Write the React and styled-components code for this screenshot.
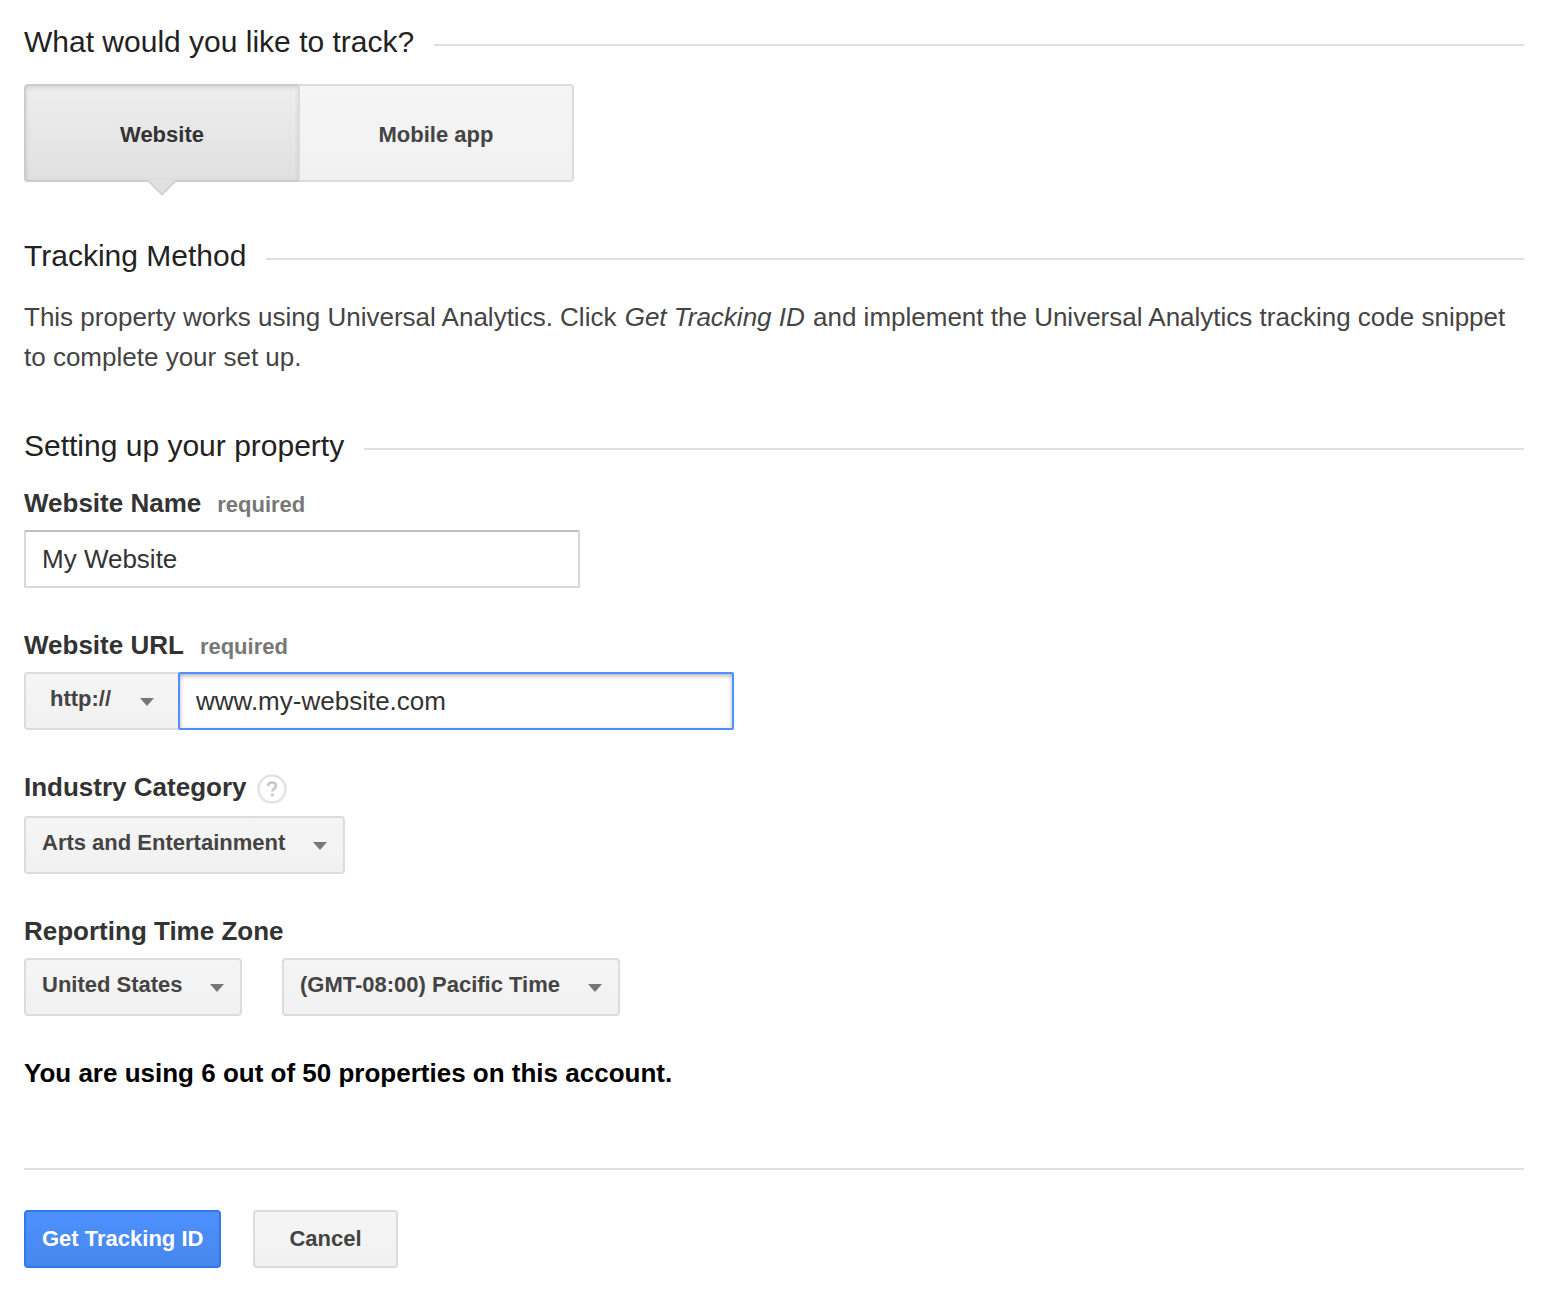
import React, { useState } from "react";
import styled, { createGlobalStyle, css } from "styled-components";

const GlobalStyle = createGlobalStyle`
  *, *::before, *::after { box-sizing: border-box; }
  body {
    margin: 0;
    background: #fff;
    color: #333;
    font-family: "Liberation Sans", Arial, Helvetica, sans-serif;
    font-size: 26px;
    line-height: 40px;
  }
  button, input, select { font-family: inherit; margin: 0; }
`;

const Form = styled.form`
  padding: 22px 36px 30px 24px;
`;

const SectionTitle = styled.h2`
  display: flex;
  align-items: center;
  gap: 20px;
  margin: 0;
  color: #222;
  font-size: 30px;
  font-weight: normal;
  line-height: 40px;

  &::after {
    content: "";
    flex: 1;
    height: 2px;
    margin-top: 6px;
    background: #e0e0e0;
  }
`;

const Section = styled.section`
  margin-bottom: ${(p) => p.$gap}px;
`;

const Tabs = styled.div`
  display: flex;
  max-width: 550px;
  margin-top: 22px;
`;

const Tab = styled.button`
  position: relative;
  flex: 1;
  height: 98px;
  padding: 4px 16px 0;
  border: 2px solid #dcdcdc;
  border-radius: 0 4px 4px 0;
  border-left-width: 0;
  background: linear-gradient(#f5f5f5, #f1f1f1);
  color: #444;
  font-size: 22px;
  font-weight: bold;
  cursor: pointer;

  &:first-child {
    border-left-width: 2px;
    border-radius: 4px 0 0 4px;
  }

  ${(p) =>
    p.$active &&
    css`
      border-color: #ccc #dcdcdc #ccc #ccc;
      background: linear-gradient(#eee, #e0e0e0);
      box-shadow: inset 0 2px 4px rgba(0, 0, 0, 0.1);
      color: #333;
    `}
`;

const Pointer = styled.svg`
  position: absolute;
  top: 100%;
  left: 50%;
  width: 28px;
  height: 16px;
  margin-left: -14px;
`;

const Copy = styled.p`
  margin: 21px 0 0;
  color: #444;

  em { margin: 0 1px; }
`;

const Fields = styled.div`
  margin-top: 22px;
`;

const Field = styled.div`
  display: flex;
  flex-direction: column;
  align-items: flex-start;
  gap: 12px;
  margin-bottom: 42px;
`;

const LabelRow = styled.div`
  display: flex;
  align-items: flex-start;
  gap: 10px;
  line-height: 30px;
`;

const Label = styled.label`
  color: #333;
  font-weight: bold;
`;

const Required = styled.span`
  margin-left: 16px;
  color: #777;
  font-size: 22px;
  line-height: 1;
`;

const Controls = styled.div`
  display: flex;
  gap: ${(p) => p.$gap || 0}px;
  max-width: 100%;
`;

const TextInput = styled.input`
  width: 556px;
  max-width: 100%;
  height: 58px;
  padding: 0 16px;
  border: 2px solid #d9d9d9;
  border-top-color: #c0c0c0;
  border-radius: 2px;
  background: #fff;
  color: #333;
  font-size: 26px;
  outline: none;

  ${(p) =>
    p.$focused &&
    css`
      border-color: #4d90fe;
      box-shadow: inset 0 2px 4px rgba(0, 0, 0, 0.3);
    `}
`;

const SelectBox = styled.div`
  display: grid;
  align-items: center;

  & > * { grid-area: 1 / 1; }
`;

const Select = styled.select`
  appearance: none;
  height: 58px;
  padding: 0 57px 6px 16px;
  border: 2px solid #dcdcdc;
  border-radius: 4px;
  background: linear-gradient(#f5f5f5, #f1f1f1);
  color: #444;
  font-size: 22px;
  font-weight: bold;
  outline: none;
  cursor: pointer;

  ${(p) =>
    p.$attached &&
    css`
      padding-right: 66px;
      padding-left: 24px;
      border-right-width: 0;
      border-radius: 4px 0 0 4px;
    `}
`;

const Caret = styled.svg`
  justify-self: end;
  width: 14px;
  height: 8px;
  margin-top: 2px;
  margin-right: ${(p) => (p.$attached ? 24 : 18)}px;
  pointer-events: none;
`;

const HelpButton = styled.button`
  display: flex;
  width: 30px;
  height: 30px;
  margin-top: 2px;
  padding: 0;
  border: 0;
  background: none;
  cursor: pointer;
`;

const Quota = styled.p`
  margin: 0;
  color: #000;
  font-weight: bold;
  line-height: 30px;
`;

const Actions = styled.div`
  display: flex;
  gap: 32px;
  margin-top: 80px;
  padding-top: 40px;
  border-top: 2px solid #e0e0e0;
`;

const Action = styled.button`
  height: 58px;
  padding: 0 ${(p) => (p.$primary ? 16 : 34)}px;
  border: 2px solid ${(p) => (p.$primary ? "#3079ed" : "#dcdcdc")};
  border-radius: 4px;
  background: ${(p) =>
    p.$primary
      ? "linear-gradient(#4d90fe, #4787ed)"
      : "linear-gradient(#f5f5f5, #f1f1f1)"};
  color: ${(p) => (p.$primary ? "#fff" : "#444")};
  font-size: 22px;
  font-weight: bold;
  cursor: pointer;
`;

function Dropdown({ options, attached, ...rest }) {
  return (
    <SelectBox>
      <Select $attached={attached} {...rest}>
        {options.map((option) => (
          <option key={option}>{option}</option>
        ))}
      </Select>
      <Caret $attached={attached} viewBox="0 0 14 8" aria-hidden="true">
        <path d="M0 0h14L7 8z" fill="#777" />
      </Caret>
    </SelectBox>
  );
}

const targets = ["Website", "Mobile app"];

export default function App() {
  const [target, setTarget] = useState("Website");

  return (
    <>
      <GlobalStyle />
      <Form onSubmit={(e) => e.preventDefault()}>
        <Section $gap={54}>
          <SectionTitle>What would you like to track?</SectionTitle>
          <Tabs>
            {targets.map((name) => (
              <Tab
                key={name}
                type="button"
                $active={name === target}
                aria-pressed={name === target}
                onClick={() => setTarget(name)}
              >
                {name}
                {name === target && (
                  <Pointer viewBox="0 0 28 16" aria-hidden="true">
                    <path d="M0 0h28v1L14 15 0 1z" fill="#e0e0e0" />
                    <path d="M0 0.700 14 14.700l14-14" fill="none" stroke="#ccc" strokeWidth="1.400" />
                  </Pointer>
                )}
              </Tab>
            ))}
          </Tabs>
        </Section>

        <Section $gap={49}>
          <SectionTitle>Tracking Method</SectionTitle>
          <Copy>
            This property works using Universal Analytics. Click{" "}
            <em>Get Tracking ID</em> and implement the Universal Analytics
            tracking code snippet to complete your set up.
          </Copy>
        </Section>

        <Section $gap={0}>
          <SectionTitle>Setting up your property</SectionTitle>
          <Fields>
            <Field>
              <LabelRow>
                <Label htmlFor="site-name">
                  Website Name<Required>required</Required>
                </Label>
              </LabelRow>
              <TextInput id="site-name" type="text" defaultValue="My Website" />
            </Field>

            <Field>
              <LabelRow>
                <Label htmlFor="site-url">
                  Website URL<Required>required</Required>
                </Label>
              </LabelRow>
              <Controls>
                <Dropdown
                  attached
                  aria-label="Protocol"
                  options={["http://"]}
                />
                <TextInput
                  id="site-url"
                  type="text"
                  $focused
                  defaultValue="www.my-website.com"
                />
              </Controls>
            </Field>

            <Field>
              <LabelRow>
                <Label htmlFor="category">Industry Category</Label>
                <HelpButton type="button" aria-label="Help">
                  <svg width="30" height="30" viewBox="0 0 30 30" aria-hidden="true">
                    <circle cx="15" cy="15" r="13.500" fill="#fff" stroke="#e2e2e2" strokeWidth="2.400" />
                    <path
                      d="M11 12.200C11.100 9.700 12.800 8.500 15 8.500c2.300 0 4 1.200 4 3.200 0 2.700-3.700 2.800-3.700 5.800"
                      fill="none"
                      stroke="#c8c8c8"
                      strokeWidth="2.600"
                    />
                    <circle cx="15.300" cy="20.900" r="1.700" fill="#c8c8c8" />
                  </svg>
                </HelpButton>
              </LabelRow>
              <Dropdown id="category" options={["Arts and Entertainment"]} />
            </Field>

            <Field>
              <LabelRow>
                <Label htmlFor="country">Reporting Time Zone</Label>
              </LabelRow>
              <Controls $gap={40}>
                <Dropdown id="country" options={["United States"]} />
                <Dropdown
                  aria-label="Time zone"
                  options={["(GMT-08:00) Pacific Time"]}
                />
              </Controls>
            </Field>
          </Fields>
          <Quota>You are using 6 out of 50 properties on this account.</Quota>
        </Section>

        <Actions>
          <Action type="submit" $primary>
            Get Tracking ID
          </Action>
          <Action type="button">Cancel</Action>
        </Actions>
      </Form>
    </>
  );
}
